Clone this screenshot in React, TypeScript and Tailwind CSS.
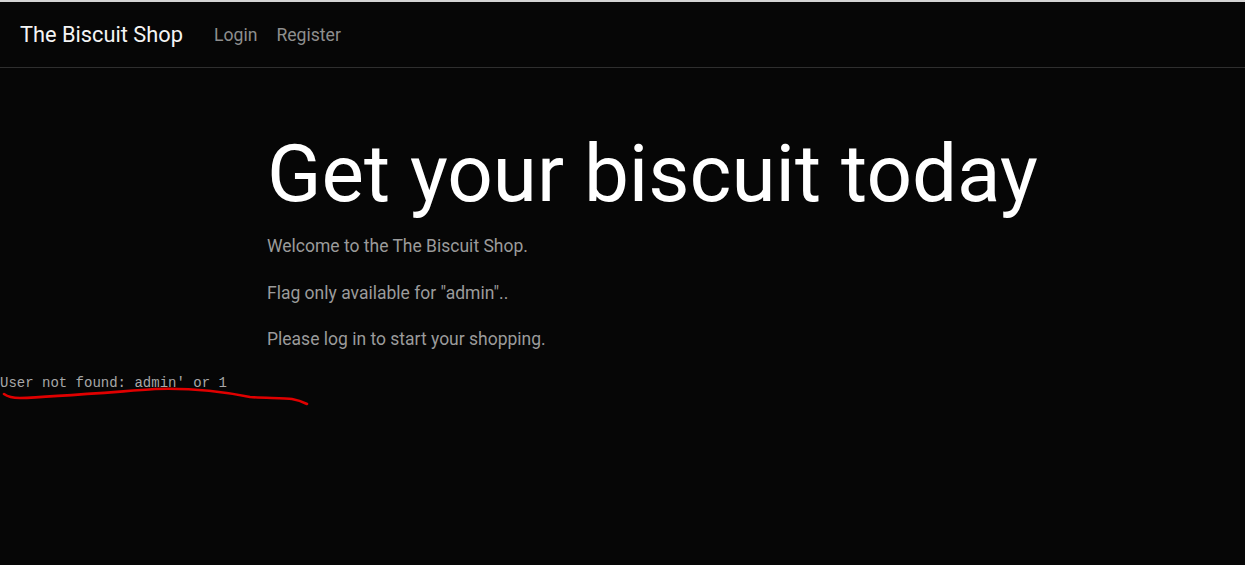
export default function App() {
  return (
    <div className="min-h-screen bg-[#060606] font-['Roboto',sans-serif]">
      <div className="h-[2px] bg-[#d4d4d4]" />
      <nav className="flex h-[66px] items-center border-b border-[#2e2e2e] bg-[#060606] px-[20px] pt-[1px]">
        <a href="#" className="mr-[31px] text-[21.8px] text-[#f4f4f4]">
          The Biscuit Shop
        </a>
        <a href="#" className="mr-[19px] text-[17.6px] text-[#8e8e8e]">
          Login
        </a>
        <a href="#" className="text-[17.6px] text-[#8e8e8e]">
          Register
        </a>
      </nav>

      <main className="pl-[267px] pt-[58px]">
        <h1 className="text-[80px] font-normal leading-[1.2] text-white">
          Get your biscuit today
        </h1>
        <div className="mt-[11px] text-[17.5px] leading-[27px] text-[#9b9b9b]">
          <p className="mb-[19.5px]">Welcome to the The Biscuit Shop.</p>
          <p className="mb-[19.5px]">Flag only available for "admin"..</p>
          <p>Please log in to start your shopping.</p>
        </div>
      </main>

      <div className="relative mt-[21px]">
        <pre className="font-['Liberation_Mono',monospace] text-[14px] leading-[18px] text-[#a8a8a8]">
          User not found: admin' or 1
        </pre>
        <svg
          className="absolute left-0 top-[7px]"
          width="320"
          height="30"
          viewBox="0 0 320 30"
          fill="none"
        >
          <path
            d="M4 13 C 8 16, 12 17, 20 17 C 50 16, 100 12, 155 8 C 185 7, 215 9, 250 16 C 265 17, 285 17, 292 18 C 298 19, 303 21, 307 23"
            stroke="#e00000"
            strokeWidth="2.6"
            strokeLinecap="round"
          />
        </svg>
      </div>
    </div>
  );
}
